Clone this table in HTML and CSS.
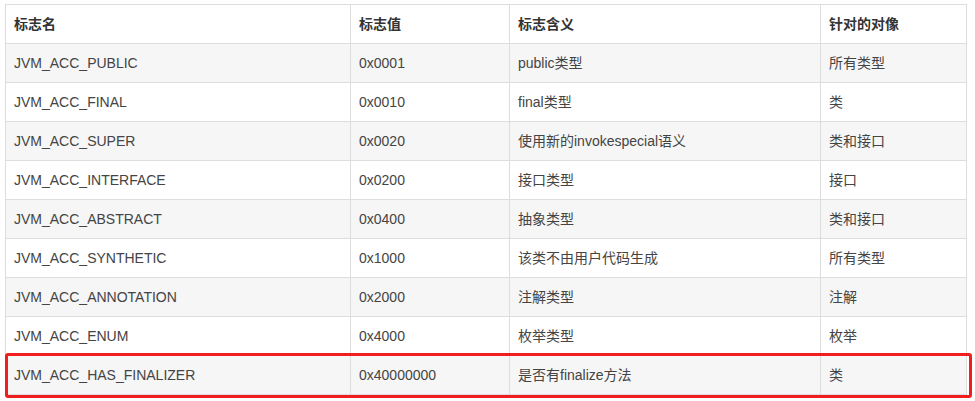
FILE: index.html
```html
<!DOCTYPE html>
<html lang="zh-CN">
<head>
<meta charset="utf-8">
<title>访问标志</title>
<link rel="stylesheet" href="styles.css">
</head>
<body>
<div class="wrap">
<table class="flags">
<colgroup>
<col class="c1"><col class="c2"><col class="c3"><col class="c4">
</colgroup>
<thead>
<tr><th>标志名</th><th>标志值</th><th>标志含义</th><th>针对的对像</th></tr>
</thead>
<tbody>
<tr><td>JVM_ACC_PUBLIC</td><td>0x0001</td><td>public类型</td><td>所有类型</td></tr>
<tr><td>JVM_ACC_FINAL</td><td>0x0010</td><td>final类型</td><td>类</td></tr>
<tr><td>JVM_ACC_SUPER</td><td>0x0020</td><td>使用新的invokespecial语义</td><td>类和接口</td></tr>
<tr><td>JVM_ACC_INTERFACE</td><td>0x0200</td><td>接口类型</td><td>接口</td></tr>
<tr><td>JVM_ACC_ABSTRACT</td><td>0x0400</td><td>抽象类型</td><td>类和接口</td></tr>
<tr><td>JVM_ACC_SYNTHETIC</td><td>0x1000</td><td>该类不由用户代码生成</td><td>所有类型</td></tr>
<tr><td>JVM_ACC_ANNOTATION</td><td>0x2000</td><td>注解类型</td><td>注解</td></tr>
<tr><td>JVM_ACC_ENUM</td><td>0x4000</td><td>枚举类型</td><td>枚举</td></tr>
<tr><td>JVM_ACC_HAS_FINALIZER</td><td>0x40000000</td><td>是否有finalize方法</td><td>类</td></tr>
</tbody>
</table>
<div class="highlight"></div>
</div>
</body>
</html>
```
FILE: styles.css
```css
html, body {
  margin: 0;
  padding: 0;
  background: #fff;
}
body {
  padding: 4px 0 7px 5px;
  min-height: 401px;
  box-sizing: border-box;
  font-family: "Liberation Sans", Arial, "Noto Sans CJK SC", sans-serif;
  font-size: 14px;
  color: #333;
}
.wrap {
  position: relative;
  width: 961px;
}
.flags {
  width: 961px;
  border-collapse: collapse;
  table-layout: fixed;
}
.c1 { width: 345px; }
.c2 { width: 159px; }
.c3 { width: 311px; }
.c4 { width: 146px; }
.flags th,
.flags td {
  border: 1px solid #ddd;
  height: 39px;
  padding: 0 0 0 8px;
  text-align: left;
  vertical-align: middle;
  line-height: 20px;
  box-sizing: border-box;
}
.flags th {
  font-weight: bold;
  background: #fff;
}
.flags td {
  color: #444;
}
.flags tbody tr:nth-child(odd) td {
  background: #f6f6f6;
}
.highlight {
  position: absolute;
  left: 0;
  top: 349px;
  width: 967px;
  height: 45px;
  border: 3px solid #f21d1d;
  border-radius: 3px;
  box-sizing: border-box;
  pointer-events: none;
}
```
